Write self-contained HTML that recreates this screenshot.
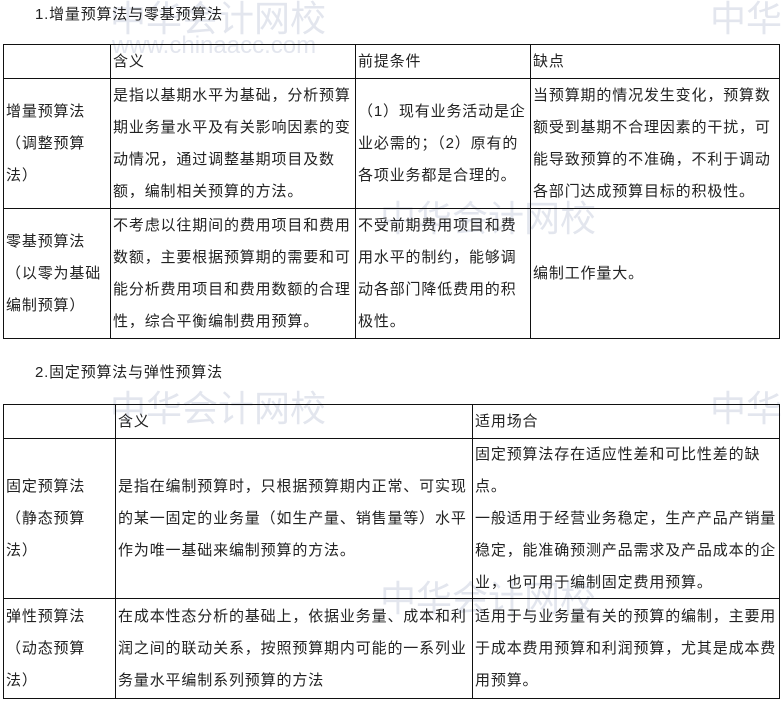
<!DOCTYPE html><html><head><meta charset="utf-8"><style>
body{margin:0;width:783px;height:707px;background:#fff;position:relative;overflow:hidden;font-family:"Liberation Sans","Noto Sans CJK SC",sans-serif;color:#222;}
.t{position:absolute;font-size:15px;letter-spacing:0.8px;white-space:nowrap;}
.c{position:absolute;display:flex;align-items:center;font-size:15px;letter-spacing:0.85px;line-height:32px;white-space:nowrap;padding-left:2px;box-sizing:border-box;}
.l{position:absolute;background:#111;}
.wm{position:absolute;color:#e3e6ee;font-size:36px;white-space:nowrap;font-family:"Noto Sans CJK SC",sans-serif;}
.wm2{position:absolute;color:#e3e6ee;font-size:24px;white-space:nowrap;}
</style></head><body>
<div class="wm" style="left:110px;top:-10px">中华会计网校</div>
<div class="wm2" style="left:112px;top:32px">www.chinaacc.com</div>
<div class="wm" style="left:380px;top:190px">中华会计网校</div>
<div class="wm" style="left:110px;top:380px">中华会计网校</div>
<div class="wm" style="left:380px;top:570px">中华会计网校</div>
<div class="wm" style="left:710px;top:-10px">中华</div>
<div class="wm" style="left:710px;top:380px">中华</div>

<div class="t" style="left:35px;top:3px">1.增量预算法与零基预算法</div>
<div class="t" style="left:35px;top:361px">2.固定预算法与弹性预算法</div>

<!-- table1 lines -->
<div class="l" style="left:3px;top:44px;width:777px;height:1px"></div>
<div class="l" style="left:3px;top:78px;width:777px;height:1px"></div>
<div class="l" style="left:3px;top:208px;width:777px;height:1px"></div>
<div class="l" style="left:3px;top:338px;width:777px;height:1px"></div>
<div class="l" style="left:3px;top:44px;width:1px;height:295px"></div>
<div class="l" style="left:110px;top:44px;width:1px;height:295px"></div>
<div class="l" style="left:355px;top:44px;width:1px;height:295px"></div>
<div class="l" style="left:530px;top:44px;width:1px;height:295px"></div>
<div class="l" style="left:779px;top:44px;width:1px;height:295px"></div>

<div class="c" style="left:111px;top:45px;height:33px">含义</div>
<div class="c" style="left:356px;top:45px;height:33px">前提条件</div>
<div class="c" style="left:531px;top:45px;height:33px">缺点</div>

<div class="c" style="left:4px;top:79px;height:129px">增量预算法<br>（调整预算<br>法）</div>
<div class="c" style="left:111px;top:79px;height:129px">是指以基期水平为基础，分析预算<br>期业务量水平及有关影响因素的变<br>动情况，通过调整基期项目及数<br>额，编制相关预算的方法。</div>
<div class="c" style="left:356px;top:79px;height:129px">（1）现有业务活动是企<br>业必需的；（2）原有的<br>各项业务都是合理的。</div>
<div class="c" style="left:531px;top:79px;height:129px">当预算期的情况发生变化，预算数<br>额受到基期不合理因素的干扰，可<br>能导致预算的不准确，不利于调动<br>各部门达成预算目标的积极性。</div>

<div class="c" style="left:4px;top:209px;height:129px">零基预算法<br>（以零为基础<br>编制预算）</div>
<div class="c" style="left:111px;top:209px;height:129px">不考虑以往期间的费用项目和费用<br>数额，主要根据预算期的需要和可<br>能分析费用项目和费用数额的合理<br>性，综合平衡编制费用预算。</div>
<div class="c" style="left:356px;top:209px;height:129px">不受前期费用项目和费<br>用水平的制约，能够调<br>动各部门降低费用的积<br>极性。</div>
<div class="c" style="left:531px;top:209px;height:129px">编制工作量大。</div>

<!-- table2 lines -->
<div class="l" style="left:3px;top:404px;width:777px;height:1px"></div>
<div class="l" style="left:3px;top:438px;width:777px;height:1px"></div>
<div class="l" style="left:3px;top:598px;width:777px;height:1px"></div>
<div class="l" style="left:3px;top:698px;width:777px;height:1px"></div>
<div class="l" style="left:3px;top:404px;width:1px;height:295px"></div>
<div class="l" style="left:115px;top:404px;width:1px;height:295px"></div>
<div class="l" style="left:472px;top:404px;width:1px;height:295px"></div>
<div class="l" style="left:779px;top:404px;width:1px;height:295px"></div>

<div class="c" style="left:116px;top:405px;height:33px">含义</div>
<div class="c" style="left:473px;top:405px;height:33px">适用场合</div>

<div class="c" style="left:4px;top:439px;height:159px">固定预算法<br>（静态预算<br>法）</div>
<div class="c" style="left:116px;top:439px;height:159px">是指在编制预算时，只根据预算期内正常、可实现<br>的某一固定的业务量（如生产量、销售量等）水平<br>作为唯一基础来编制预算的方法。</div>
<div class="c" style="left:473px;top:439px;height:159px">固定预算法存在适应性差和可比性差的缺<br>点。<br>一般适用于经营业务稳定，生产产品产销量<br>稳定，能准确预测产品需求及产品成本的企<br>业，也可用于编制固定费用预算。</div>

<div class="c" style="left:4px;top:599px;height:99px">弹性预算法<br>（动态预算<br>法）</div>
<div class="c" style="left:116px;top:599px;height:99px">在成本性态分析的基础上，依据业务量、成本和利<br>润之间的联动关系，按照预算期内可能的一系列业<br>务量水平编制系列预算的方法</div>
<div class="c" style="left:473px;top:599px;height:99px">适用于与业务量有关的预算的编制，主要用<br>于成本费用预算和利润预算，尤其是成本费<br>用预算。</div>
</body></html>
